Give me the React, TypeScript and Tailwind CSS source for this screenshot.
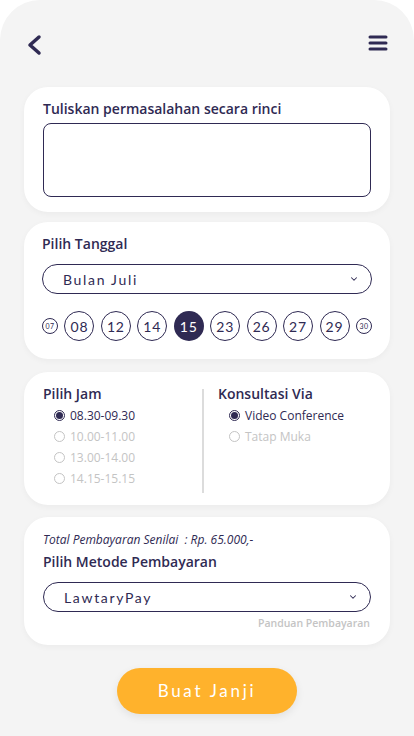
import { ChevronDown } from "lucide-react";

const DATES = ["07", "08", "12", "14", "15", "23", "26", "27", "29", "30"];
const JAM = ["08.30-09.30", "10.00-11.00", "13.00-14.00", "14.15-15.15"];
const VIA = ["Video Conference", "Tatap Muka"];

function Radio({ label, active }: { label: string; active: boolean }) {
    return (
        <div className="flex items-center gap-[5px] h-[21px]">
            <span className={`w-[11px] h-[11px] rounded-full border flex items-center justify-center ${active ? "border-[#2f2a53]" : "border-[#c4c4c4]"}`}>
                {active && <span className="w-[7px] h-[7px] rounded-full bg-[#2f2a53]" />}
            </span>
            <span className={`text-[12px] ${active ? "text-[#2f2a53] font-medium" : "text-[#c4c4c4]"}`}>{label}</span>
        </div>
    );
}

function Select({ value }: { value: string }) {
    return (
        <div className="h-[30px] rounded-full border border-[#2f2a53] flex items-center justify-between pl-5 pr-3">
            <span className="text-[14px] tracking-[0.12em] text-[#2f2a53] font-['Lato',sans-serif]">{value}</span>
            <ChevronDown size={10} strokeWidth={2.5} className="text-[#2f2a53]" />
        </div>
    );
}

export default function App() {
    return (
        <div className="w-[414px] h-[736px] bg-white font-['Open_Sans',sans-serif]">
            <div className="h-full rounded-t-[40px] bg-[#f4f4f4] px-6 flex flex-col">
                {/* Header */}
                <div className="flex justify-between items-start pt-[33px] h-[87px]">
                    <svg width="16" height="22" viewBox="0 0 16 22" className="ml-[2px] mt-[1px]">
                        <path d="M13 3 L4 11 L13 19" fill="none" stroke="#2f2a53" strokeWidth="3.5" strokeLinecap="round" strokeLinejoin="round" />
                    </svg>
                    <svg width="22" height="18" viewBox="0 0 22 18" className="mr-[1px] mt-[1px]">
                        <path d="M3 3 H19 M3 9 H19 M3 15 H19" stroke="#2f2a53" strokeWidth="3" strokeLinecap="round" />
                    </svg>
                </div>

                {/* Masalah */}
                <div className="bg-white rounded-[24px] shadow-[0_2px_6px_rgba(0,0,0,0.04)] px-[19px] pt-[12px] pb-[15px]">
                    <h2 className="text-[14px] font-semibold text-[#2f2a53] leading-5">Tuliskan permasalahan secara rinci</h2>
                    <textarea className="mt-[4px] block w-full h-[74px] rounded-[8px] border border-[#2f2a53] resize-none outline-none" />
                </div>

                {/* Tanggal */}
                <div className="mt-[10px] bg-white rounded-[24px] shadow-[0_2px_6px_rgba(0,0,0,0.04)] px-[18px] pt-[12px] pb-[18px]">
                    <h2 className="text-[14px] font-semibold text-[#2f2a53] leading-5">Pilih Tanggal</h2>
                    <div className="mt-[10px]"><Select value="Bulan Juli" /></div>
                    <div className="mt-[17px] flex items-center justify-between font-['Lato',sans-serif]">
                        {DATES.map((d, i) => {
                            const small = i === 0 || i === DATES.length - 1;
                            const active = d === "15";
                            return (
                                <span key={d}
                                    className={`rounded-full flex items-center justify-center tracking-[0.06em] ${small ? "w-[16px] h-[16px] text-[7px] border border-[#2f2a53] text-[#2f2a53]" : active ? "w-[30px] h-[30px] text-[14px] bg-[#2f2a53] text-white" : "w-[30px] h-[30px] text-[14px] border border-[#2f2a53] text-[#2f2a53]"}`}>
                                    {d}
                                </span>
                            );
                        })}
                    </div>
                </div>

                {/* Jam & Via */}
                <div className="mt-[13px] bg-white rounded-[24px] shadow-[0_2px_6px_rgba(0,0,0,0.04)] px-[19px] pt-[12px] pb-[12px] flex">
                    <div className="w-[159px]">
                        <h2 className="text-[14px] font-semibold text-[#2f2a53] leading-5">Pilih Jam</h2>
                        <div className="pl-[11px] mt-[1px]">
                            {JAM.map((j, i) => <Radio key={j} label={j} active={i === 0} />)}
                        </div>
                    </div>
                    <div className="w-[2px] bg-[#dcdcdc] mt-[5px] h-[104px]" />
                    <div className="pl-[14px]">
                        <h2 className="text-[14px] font-semibold text-[#2f2a53] leading-5">Konsultasi Via</h2>
                        <div className="pl-[11px] mt-[1px]">
                            {VIA.map((v, i) => <Radio key={v} label={v} active={i === 0} />)}
                        </div>
                    </div>
                </div>

                {/* Pembayaran */}
                <div className="mt-[12px] bg-white rounded-[24px] shadow-[0_2px_6px_rgba(0,0,0,0.04)] px-[19px] pt-[13px] pb-[13px]">
                    <p className="text-[12px] italic text-[#2f2a53] leading-5">Total Pembayaran Senilai&nbsp; : Rp. 65.000,-</p>
                    <h2 className="mt-[2px] text-[14px] font-semibold text-[#2f2a53] leading-5">Pilih Metode Pembayaran</h2>
                    <div className="mt-[10px]"><Select value="LawtaryPay" /></div>
                    <p className="mt-[4px] text-right text-[10.5px] font-semibold text-[#c4c4c4] pr-[1px]">Panduan Pembayaran</p>
                </div>

                {/* Button */}
                <div className="flex justify-center mt-[23px]">
                    <button className="w-[180px] h-[46px] rounded-full bg-[#ffb22c] shadow-[0_3px_8px_rgba(0,0,0,0.08)] text-white text-[17px] tracking-[0.16em] font-['Lato',sans-serif]">
                        Buat Janji
                    </button>
                </div>
            </div>
        </div>
    );
}
